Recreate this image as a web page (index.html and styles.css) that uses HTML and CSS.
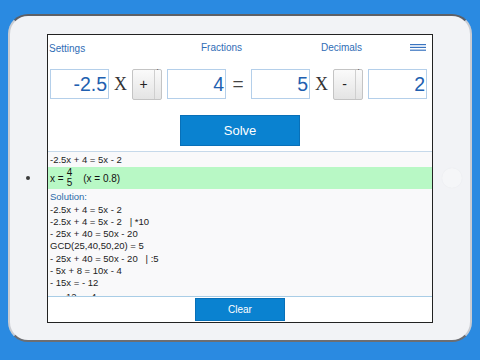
FILE: index.html
```html
<!DOCTYPE html>
<html>
<head>
<meta charset="utf-8">
<link rel="stylesheet" href="styles.css">
</head>
<body>
<div class="device">
  <div class="side"><span class="camera"></span></div>
  <div class="screen">
    <div class="header">
      <span class="link">Settings</span>
      <span class="link center">Fractions</span>
      <span class="link center">Decimals</span>
      <span class="menu"><svg width="16" height="7" viewBox="0 0 16 7"><rect x="0" y="0" width="16" height="1.2" fill="#3a74c0"/><rect x="0" y="2.8" width="16" height="1.2" fill="#3a74c0"/><rect x="0" y="5.6" width="16" height="1.2" fill="#3a74c0"/></svg></span>
    </div>
    <div class="equation">
      <div class="box">-2.5</div>
      <div class="var">X</div>
      <div class="sel"><span class="sign">+</span><span class="arrow">&#729;</span></div>
      <div class="box gap">4</div>
      <div class="eq">=</div>
      <div class="box">5</div>
      <div class="var">X</div>
      <div class="sel"><span class="sign">-</span><span class="arrow">&#729;</span></div>
      <div class="box gap">2</div>
    </div>
    <div class="solve-row"><button class="btn solve">Solve</button></div>
    <div class="result">
      <div class="line">-2.5x + 4 = 5x - 2</div>
      <div class="answer">
        <span>x =</span>
        <span class="frac"><span>4</span><span class="den">5</span></span>
        <span class="dec">(x = 0.8)</span>
      </div>
      <div class="line title">Solution:</div>
      <div class="line">-2.5x + 4 = 5x - 2</div>
      <div class="line">-2.5x + 4 = 5x - 2 &nbsp; | *10</div>
      <div class="line">- 25x + 40 = 50x - 20</div>
      <div class="line">GCD(25,40,50,20) = 5</div>
      <div class="line">- 25x + 40 = 50x - 20 &nbsp; | :5</div>
      <div class="line">- 5x + 8 = 10x - 4</div>
      <div class="line">- 15x = - 12</div>
      <div class="line fracline">
        <span>x =</span>
        <span class="frac"><span>12</span><span class="den">15</span></span>
        <span>=</span>
        <span class="frac"><span>4</span><span class="den">5</span></span>
      </div>
    </div>
    <div class="bottom"><button class="btn clear">Clear</button></div>
  </div>
  <div class="side"><span class="home"></span></div>
</div>
</body>
</html>
```
FILE: styles.css
```css
html, body {
  margin: 0;
  padding: 0;
}
body {
  width: 480px;
  height: 360px;
  background: #2a8ae1;
  overflow: hidden;
  font-family: "Liberation Sans", Arial, sans-serif;
}
.device {
  margin: 14px 0 0 8px;
  width: 464px;
  height: 328px;
  box-sizing: border-box;
  background: #f2f3f6;
  border-radius: 20px;
  border-top: 2px solid #5e6066;
  border-bottom: 2px solid #6c6e73;
  border-left: 2px solid #c9ccd2;
  border-right: 2px solid #c9ccd2;
  display: flex;
  align-items: stretch;
}
.side {
  width: 37px;
  display: flex;
  align-items: center;
  justify-content: center;
}
.camera {
  width: 4px;
  height: 4px;
  border-radius: 50%;
  background: #3a3a3a;
  margin-right: 2px;
}
.home {
  width: 20px;
  height: 20px;
  border-radius: 50%;
  background: #f5f6f8;
  box-shadow: 0 0 1px #e2e4e8;
}
.screen {
  margin: 18px 0 17px 0;
  width: 386px;
  box-sizing: border-box;
  border: 1px solid #222;
  background: #fff;
  display: flex;
  flex-direction: column;
  overflow: hidden;
}
.header {
  height: 26px;
  display: grid;
  grid-template-columns: 113px 120px 120px 1fr;
  align-items: center;
}
.link {
  color: #2f6db6;
  font-size: 10px;
  padding-left: 1px;
  padding-top: 1px;
}
.link.center {
  text-align: center;
  padding-top: 0;
  padding-bottom: 1px;
}
.menu {
  display: flex;
  justify-content: flex-end;
  padding-right: 6px;
  padding-bottom: 2px;
}
.equation {
  margin-top: 8px;
  padding-left: 2px;
  height: 31px;
  display: flex;
  align-items: flex-start;
}
.box {
  width: 59px;
  height: 30px;
  box-sizing: border-box;
  border: 1px solid #b4cfea;
  color: #2160b0;
  font-size: 19.5px;
  line-height: 28px;
  text-align: right;
  padding-right: 1px;
}
.box.gap {
  margin-left: 5px;
}
.var {
  width: 23px;
  text-align: center;
  font-family: "Liberation Serif", "Times New Roman", serif;
  font-size: 18px;
  line-height: 30px;
  color: #333;
}
.eq {
  width: 25px;
  text-align: center;
  font-size: 19px;
  line-height: 29px;
  color: #444;
  padding-right: 1px;
  box-sizing: border-box;
}
.sel {
  width: 30px;
  height: 31px;
  box-sizing: border-box;
  border: 1px solid #c4c4c4;
  border-radius: 2px;
  background: linear-gradient(#fafafa, #e4e4e4);
  display: flex;
}
.sign {
  width: 21px;
  border-right: 1px solid #cfcfcf;
  text-align: center;
  font-size: 14px;
  line-height: 29px;
  color: #222;
}
.arrow {
  flex: 1;
  text-align: center;
  font-size: 9px;
  line-height: 6px;
  color: #333;
}
.solve-row {
  margin-top: 15px;
  height: 31px;
  display: flex;
  justify-content: center;
}
.btn {
  border: 1px solid #0870b8;
  background: #0a82d0;
  color: #fff;
  font-family: "Liberation Sans", Arial, sans-serif;
  padding: 0;
  margin: 0;
}
.solve {
  width: 120px;
  height: 31px;
  font-size: 13px;
}
.result {
  margin-top: 5px;
  height: 145px;
  border-top: 1px solid #c6d9ea;
  background: #f9f9fa;
  padding-top: 2px;
  box-sizing: border-box;
  overflow: hidden;
  font-size: 9.5px;
  color: #222;
}
.line {
  height: 12.3px;
  line-height: 12.3px;
  padding-left: 2px;
  white-space: nowrap;
}
.title {
  color: #2a6aa8;
  margin-top: 2px;
}
.answer {
  margin-top: 1px;
  height: 22px;
  background: #b8f8c5;
  display: flex;
  align-items: center;
  gap: 3px;
  padding-left: 2px;
  color: #111;
  font-size: 10px;
}
.frac {
  display: inline-flex;
  flex-direction: column;
  align-items: center;
  line-height: 10px;
  margin-right: 6px;
}
.dec {
  margin-left: 2px;
}
.fracline {
  display: flex;
  align-items: center;
  gap: 3px;
  height: 22px;
  margin-top: 1px;
}
.fracline .frac {
  margin-right: 3px;
}
.bottom {
  flex: 1;
  border-top: 1px solid #a9cde6;
  display: flex;
  justify-content: center;
  padding-top: 1px;
}
.clear {
  width: 90px;
  height: 23px;
  font-size: 10px;
}
```
